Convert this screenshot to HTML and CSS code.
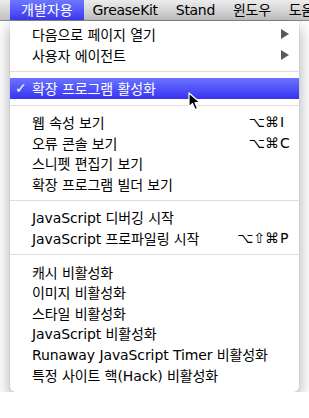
FILE: index.html
```html
<!DOCTYPE html>
<html lang="ko">

<head>
    <meta charset="UTF-8">
    <meta name="viewport" content="width=device-width, initial-scale=1.0">
    <title>개발자용 메뉴</title>
    <link rel="stylesheet" href="styles.css">
</head>

<body>
    <div class="menubar">
        <div class="bar-item active">개발자용</div>
        <div class="bar-item">GreaseKit</div>
        <div class="bar-item">Stand</div>
        <div class="bar-item">윈도우</div>
        <div class="bar-item">도움말</div>
    </div>

    <div class="menu">
        <div class="item"><span class="check"></span><span class="label">다음으로 페이지 열기</span><span class="arrow"></span></div>
        <div class="item"><span class="check"></span><span class="label">사용자 에이전트</span><span class="arrow"></span></div>
        <div class="sep"></div>
        <div class="item selected"><span class="check">✓</span><span class="label">확장 프로그램 활성화</span></div>
        <div class="sep"></div>
        <div class="item"><span class="check"></span><span class="label">웹 속성 보기</span><span class="keys"><span class="mods">⌥⌘</span><span class="key">I</span></span></div>
        <div class="item"><span class="check"></span><span class="label">오류 콘솔 보기</span><span class="keys"><span class="mods">⌥⌘</span><span class="key">C</span></span></div>
        <div class="item"><span class="check"></span><span class="label">스니펫 편집기 보기</span></div>
        <div class="item"><span class="check"></span><span class="label">확장 프로그램 빌더 보기</span></div>
        <div class="sep"></div>
        <div class="item"><span class="check"></span><span class="label">JavaScript 디버깅 시작</span></div>
        <div class="item"><span class="check"></span><span class="label">JavaScript 프로파일링 시작</span><span class="keys"><span class="mods">⌥⇧⌘</span><span class="key">P</span></span></div>
        <div class="sep"></div>
        <div class="item"><span class="check"></span><span class="label">캐시 비활성화</span></div>
        <div class="item"><span class="check"></span><span class="label">이미지 비활성화</span></div>
        <div class="item"><span class="check"></span><span class="label">스타일 비활성화</span></div>
        <div class="item"><span class="check"></span><span class="label">JavaScript 비활성화</span></div>
        <div class="item"><span class="check"></span><span class="label">Runaway JavaScript Timer 비활성화</span></div>
        <div class="item"><span class="check"></span><span class="label">특정 사이트 핵(Hack) 비활성화</span></div>

        <!-- mouse pointer over the selected row -->
        <svg class="cursor" width="13" height="20" viewBox="0 0 13 20">
            <path d="M1 1 L1 15 L4.5 11.5 L7 17.5 L9.5 16.5 L7 10.5 L12 10.5 Z" fill="#000" stroke="#fff" stroke-width="1.2" stroke-linejoin="round"/>
        </svg>
    </div>
</body>

</html>
```

FILE: styles.css
```css
body {
    margin: 0;
    background: #ffffff;
    font-family: "DejaVu Sans", "Noto Sans CJK KR", sans-serif;
    font-size: 14px;
    color: #000000;
    overflow: hidden;
}

.menubar {
    display: flex;
    height: 21px;
    padding-left: 10px;
    background: linear-gradient(to bottom, #ececec, #d2d2d2 60%, #c4c4c4);
    border-bottom: 1px solid #8c8c8c;
    box-sizing: border-box;
    white-space: nowrap;
    overflow: hidden;
}

.bar-item {
    padding: 0 9px;
    line-height: 20px;
    font-size: 14px;
    letter-spacing: -0.3px;
}

.bar-item.active {
    background: linear-gradient(to bottom, #6c78ff, #3d3af3);
    color: #ffffff;
    padding: 0 11px;
    letter-spacing: 0;
}

.menu {
    position: relative;
    width: 289px;
    margin-left: 10px;
    padding: 3px 0 7px;
    background: #ffffff;
    border-radius: 0 0 5px 5px;
    box-shadow: 0 6px 16px rgba(0, 0, 0, 0.35), 0 0 1px rgba(0, 0, 0, 0.3);
}

.item {
    display: flex;
    align-items: center;
    height: 20.6px;
    white-space: nowrap;
}

.check {
    width: 22px;
    padding-left: 5px;
    box-sizing: border-box;
    flex-shrink: 0;
}

.label {
    flex: 1;
    letter-spacing: -0.1px;
}

.item.selected {
    background: linear-gradient(to bottom, #6a74ff, #3833f1);
    color: #ffffff;
}

.arrow {
    width: 0;
    height: 0;
    margin-right: 10px;
    border-top: 5px solid transparent;
    border-bottom: 5px solid transparent;
    border-left: 8px solid #5a5a5a;
}

.keys {
    display: flex;
}

.mods {
    text-align: right;
}

.key {
    width: 19px;
    padding-left: 1px;
}

.sep {
    height: 13px;
    display: flex;
    align-items: center;
}

.sep::after {
    content: "";
    flex: 1;
    height: 1px;
    background: #dedede;
}

.cursor {
    position: absolute;
    left: 178px;
    top: 71px;
}
```
